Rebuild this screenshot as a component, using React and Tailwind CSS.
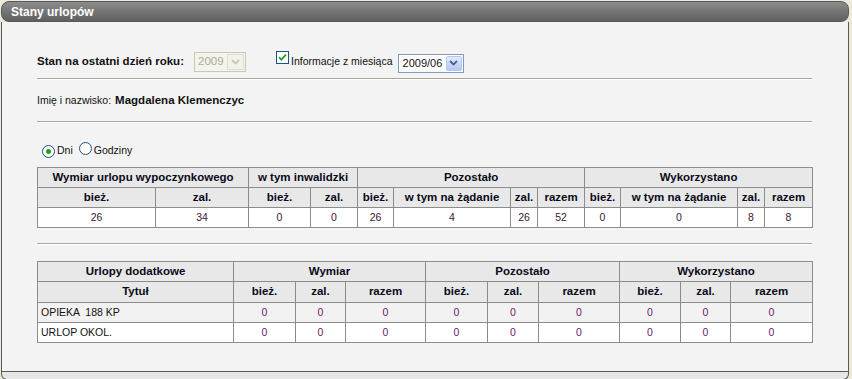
const font = "font-['Liberation_Sans',Arial,sans-serif]";

function Check() {
  return (
    <span className="inline-flex w-[13px] h-[13px] border border-[#1c5180] bg-white items-center justify-center">
      <svg width="9" height="9" viewBox="0 0 9 9">
        <path d="M1 4.2 L3.3 6.6 L8 1.6" fill="none" stroke="#21a121" strokeWidth="1.8" />
      </svg>
    </span>
  );
}

function Radio({ on }) {
  return (
    <span className="inline-flex w-[13px] h-[13px] rounded-full border border-[#1c5180] bg-white items-center justify-center">
      {on && <span className="w-[5px] h-[5px] rounded-full bg-[#21a121]" />}
    </span>
  );
}

function Chevron({ color }) {
  return (
    <svg width="9" height="6" viewBox="0 0 9 6">
      <path d="M1 1 L4.5 4.5 L8 1" fill="none" stroke={color} strokeWidth="1.8" />
    </svg>
  );
}

function Hr() {
  return <div className="h-[2px] border-t border-[#aca899] border-b border-b-white" />;
}

const th = "border border-[#8c8c8c] bg-[#e8e8e8] font-bold text-[11.5px] text-center text-[#0a0a1a] h-[20px] p-0";
const td = "border border-[#8c8c8c] text-center h-[20px] p-0";

function MainTable() {
  const widths = [118, 93, 62, 47, 36, 117, 27, 47, 36, 117, 27, 48];
  const sub = ["bież.", "zal.", "bież.", "zal.", "bież.", "w tym na żądanie", "zal.", "razem", "bież.", "w tym na żądanie", "zal.", "razem"];
  const vals = ["26", "34", "0", "0", "26", "4", "26", "52", "0", "0", "8", "8"];
  return (
    <table className="table-fixed border-collapse w-[775px] text-[10.5px]">
      <colgroup>
        {widths.map((w, i) => <col key={i} style={{ width: w }} />)}
      </colgroup>
      <tbody>
        <tr>
          <td colSpan={2} className={th}>Wymiar urlopu wypoczynkowego</td>
          <td colSpan={2} className={th}>w tym inwalidzki</td>
          <td colSpan={4} className={th}>Pozostało</td>
          <td colSpan={4} className={th}>Wykorzystano</td>
        </tr>
        <tr>
          {sub.map((s, i) => <td key={i} className={th}>{s}</td>)}
        </tr>
        <tr className="bg-white">
          {vals.map((v, i) => <td key={i} className={td + " text-[#3a163a]"}>{v}</td>)}
        </tr>
      </tbody>
    </table>
  );
}

function ExtraTable() {
  const widths = [196, 62, 50, 80, 62, 51, 81, 61, 50, 82];
  const rows = [
    { name: "OPIEKA  188 KP", bg: "bg-[#f2f2f2]" },
    { name: "URLOP OKOL.", bg: "bg-white" },
  ];
  return (
    <table className="table-fixed border-collapse w-[775px] text-[10.5px]">
      <colgroup>
        {widths.map((w, i) => <col key={i} style={{ width: w }} />)}
      </colgroup>
      <tbody>
        <tr>
          <td className={th}>Urlopy dodatkowe</td>
          <td colSpan={3} className={th}>Wymiar</td>
          <td colSpan={3} className={th}>Pozostało</td>
          <td colSpan={3} className={th}>Wykorzystano</td>
        </tr>
        <tr>
          <td className={th + " h-[21px]"}>Tytuł</td>
          {[0, 1, 2].flatMap((g) =>
            ["bież.", "zal.", "razem"].map((s) => <td key={g + s} className={th + " h-[21px]"}>{s}</td>)
          )}
        </tr>
        {rows.map((r) => (
          <tr key={r.name} className={r.bg}>
            <td className={td + " text-left pl-[3px] text-[#111] whitespace-pre"}>{r.name}</td>
            {Array.from({ length: 9 }).map((_, i) => (
              <td key={i} className={td + " text-[#6a1a6a]"}>0</td>
            ))}
          </tr>
        ))}
      </tbody>
    </table>
  );
}

export default function App() {
  return (
    <div className={`${font} w-[852px] h-[379px] bg-[#ece9d8] pt-[1px] pl-[1px] text-[10.5px] text-[#111]`}>
      <div className="w-[848px]">
        <div className="h-[21px] rounded-[8px] border border-[#5a5a5a] bg-gradient-to-b from-[#8c8c8c] to-[#5f5f5f] flex items-center pl-[9px]">
          <span className="text-white font-bold text-[12px]">Stany urlopów</span>
        </div>
        <div className="bg-[#f3f3f3] border-l border-r border-b border-[#5a5a5a] pl-[35px] pr-[36px] pt-[29px] pb-[28px]">
          <div className="flex items-center h-[21px]">
            <span className="font-bold text-[11.5px] w-[157px]">Stan na ostatni dzień roku:</span>
            <div className="w-[52px] h-[20px] border border-[#c9c7ba] bg-[#f5f4ea] flex items-center justify-between pl-[3px] pr-[1px]">
              <span className="text-[#aca899] text-[11.5px]">2009</span>
              <span className="w-[17px] h-[16px] border border-[#e0ddd0] bg-[#f2f1ea] flex items-center justify-center">
                <Chevron color="#c9c7ba" />
              </span>
            </div>
            <div className="ml-[30px] flex items-start self-start">
              <Check />
              <span className="ml-[2px] mt-[4px] leading-[13px]">Informacje z miesiąca</span>
            </div>
            <div className="ml-[5px] mt-[3px] w-[66px] h-[19px] border border-[#7f9db9] bg-white flex items-center justify-between pl-[4px] pr-[1px]">
              <span className="text-[11px] text-[#111]">2009/06</span>
              <span className="w-[16px] h-[15px] rounded-[2px] bg-gradient-to-b from-[#e2ebfd] to-[#b5c8f5] border border-[#b5c8f5] flex items-center justify-center">
                <Chevron color="#4d6185" />
              </span>
            </div>
          </div>
          <div className="mt-[6px]"><Hr /></div>
          <div className="mt-[13px] h-[16px] flex items-center">
            <span>Imię i nazwisko:</span>
            <span className="font-bold ml-[4px] text-[11.5px]">Magdalena Klemenczyc</span>
          </div>
          <div className="mt-[12px]"><Hr /></div>
          <div className="mt-[21px] h-[14px] flex items-center pl-[5px]">
            <Radio on />
            <span className="ml-[2px]">Dni</span>
            <span className="ml-[6px]"><Radio /></span>
            <span className="ml-[2px]">Godziny</span>
          </div>
          <div className="mt-[9px]"><MainTable /></div>
          <div className="mt-[15px]"><Hr /></div>
          <div className="mt-[16px]"><ExtraTable /></div>
        </div>
        <div className="h-[8px] bg-[#e6e6e6] border-l border-r border-b border-[#5a5a5a] rounded-b-[6px]" />
      </div>
    </div>
  );
}
